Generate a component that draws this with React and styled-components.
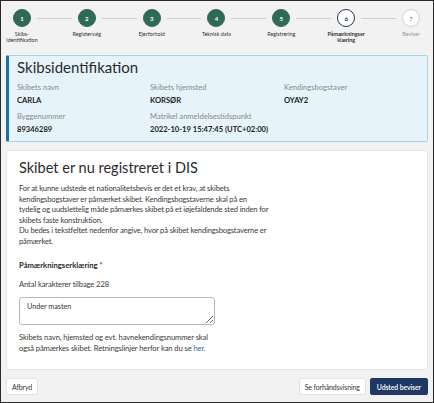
import React from "react";
import styled, { createGlobalStyle } from "styled-components";

const Global = createGlobalStyle`
  html, body { margin: 0; padding: 0; }
  body { font-family: "Lato", "Open Sans", sans-serif; color: #2b2b2b; background: #f2f2f2; }
  * { box-sizing: border-box; }
`;

const Frame = styled.div`
  width: 434px;
  height: 403px;
  border: 1px solid #2a2a2a;
  background: #f2f2f2;
  display: flex;
  flex-direction: column;
  overflow: hidden;
`;

const Stepper = styled.div`
  flex: none;
  display: flex;
  align-items: flex-start;
  padding: 8px 13px 0 12px;
  height: 54px;
`;

const Step = styled.div`
  position: relative;
  width: 18px;
  flex: none;
`;

const Circle = styled.div`
  width: 18px;
  height: 18px;
  border-radius: 50%;
  display: flex;
  align-items: center;
  justify-content: center;
  font-size: 6px;
  font-weight: 700;
  background: ${(p) => (p.$state === "done" ? "#2e6a55" : "#fff")};
  color: ${(p) => (p.$state === "done" ? "#fff" : p.$state === "active" ? "#1f2f55" : "#999")};
  border: ${(p) =>
    p.$state === "done" ? "1px solid #2e6a55" : p.$state === "active" ? "1.5px solid #27335e" : "1px solid #cfcfcf"};
`;

const StepLabel = styled.div`
  position: absolute;
  top: 22px;
  left: 50%;
  transform: translateX(-50%);
  width: 48px;
  text-align: center;
  font-size: 5.4px;
  line-height: 6.4px;
  font-weight: ${(p) => (p.$active ? 700 : 400)};
  color: ${(p) => (p.$muted ? "#999" : "#333")};
`;

const Line = styled.div`
  flex: 1;
  height: 1px;
  background: #cfcfcf;
  margin: 9px 6px 0;
`;

const InfoPanel = styled.section`
  flex: none;
  margin: 0 5px;
  height: 87px;
  background: #e6f3fb;
  border: 1px solid #a9d3e8;
  border-left: 3px solid #1b6ea6;
  border-radius: 2px;
  padding: 1px 10px 0 8px;
`;

const InfoTitle = styled.h2`
  margin: 0 0 5px;
  font-size: 15px;
  font-weight: 400;
  color: #2b2b2b;
  line-height: 20px;
`;

const InfoGrid = styled.div`
  display: grid;
  grid-template-columns: 133px 134px 1fr;
  row-gap: 6px;
`;

const Field = styled.div`
  display: flex;
  flex-direction: column;
  gap: 3px;
`;

const FieldLabel = styled.div`
  font-size: 7.6px;
  line-height: 10px;
  color: #8a8a8a;
`;

const FieldValue = styled.div`
  font-size: 7.6px;
  line-height: 10px;
  font-weight: 700;
  color: #222;
`;

const Card = styled.section`
  margin: 8px 5px 0;
  height: 220px;
  flex: none;
  background: #fff;
  border: 1px solid #e4e4e4;
  border-radius: 3px;
  padding: 7px 12px 0;
`;

const CardTitle = styled.h1`
  margin: 0 0 5px;
  font-size: 14.5px;
  font-weight: 400;
  line-height: 20px;
  color: #2b2b2b;
`;

const Paragraph = styled.p`
  margin: 0;
  white-space: nowrap;
  font-size: 7.6px;
  letter-spacing: -0.15px;
  line-height: 10.6px;
  color: #3a3a3a;
`;

const FieldHeading = styled.div`
  margin-top: 13.5px;
  font-size: 7.7px;
  font-weight: 700;
  color: #2b2b2b;
  line-height: 11px;
`;

const Required = styled.span`
  color: #c0243a;
`;

const Counter = styled.div`
  margin-top: 8px;
  font-size: 7.6px;
  letter-spacing: -0.1px;
  line-height: 11px;
  color: #3a3a3a;
`;

const TextArea = styled.textarea`
  display: block;
  margin-top: 7px;
  width: 196px;
  height: 28px;
  border: 1px solid #b8b8b8;
  border-radius: 3px;
  padding: 4px 7px;
  font-family: "Lato", "Open Sans", sans-serif;
  font-size: 7.2px;
  color: #333;
  resize: vertical;
  background: #fff;
`;

const Help = styled.p`
  margin: 7px 0 0;
  white-space: nowrap;
  font-size: 7.6px;
  letter-spacing: -0.1px;
  line-height: 11.4px;
  color: #3a3a3a;
`;

const Link = styled.a`
  color: #1b6ea6;
  text-decoration: none;
`;

const Footer = styled.div`
  flex: none;
  display: flex;
  align-items: center;
  padding: 8px 5px 0;
  gap: 4px;
`;

const Spacer = styled.div`
  flex: 1;
`;

const Button = styled.button`
  height: 17px;
  padding: 0 ${(p) => (p.$primary ? 6 : 5)}px;
  font-family: "Lato", "Open Sans", sans-serif;
  font-size: 6.9px;
  letter-spacing: -0.1px;
  border-radius: 2px;
  cursor: pointer;
  background: ${(p) => (p.$primary ? "#1e3a64" : "#fff")};
  color: ${(p) => (p.$primary ? "#fff" : "#333")};
  border: 1px solid ${(p) => (p.$primary ? "#1e3a64" : "#e2e2e2")};
  font-weight: ${(p) => (p.$primary ? 600 : 400)};
`;

const steps = [
  { n: 1, label: "Skibs-\nidentifikation", state: "done" },
  { n: 2, label: "Registervalg", state: "done" },
  { n: 3, label: "Ejerforhold", state: "done" },
  { n: 4, label: "Teknisk data", state: "done" },
  { n: 5, label: "Registrering", state: "done" },
  { n: 6, label: "Påmærkningser\nklæring", state: "active" },
  { n: 7, label: "Beviser", state: "todo" },
];

export default function App() {
  return (
    <>
      <Global />
      <Frame>
        <Stepper>
          {steps.map((s, i) => (
            <React.Fragment key={s.n}>
              {i > 0 && <Line />}
              <Step>
                <Circle $state={s.state}>{s.n}</Circle>
                <StepLabel $active={s.state === "active"} $muted={s.state === "todo"}>
                  {s.label.split("\n").map((l, j) => (
                    <div key={j}>{l}</div>
                  ))}
                </StepLabel>
              </Step>
            </React.Fragment>
          ))}
        </Stepper>

        <InfoPanel>
          <InfoTitle>Skibsidentifikation</InfoTitle>
          <InfoGrid>
            <Field>
              <FieldLabel>Skibets navn</FieldLabel>
              <FieldValue>CARLA</FieldValue>
            </Field>
            <Field>
              <FieldLabel>Skibets hjemsted</FieldLabel>
              <FieldValue>KORSØR</FieldValue>
            </Field>
            <Field>
              <FieldLabel>Kendingsbogstaver</FieldLabel>
              <FieldValue>OYAY2</FieldValue>
            </Field>
            <Field>
              <FieldLabel>Byggenummer</FieldLabel>
              <FieldValue>89346289</FieldValue>
            </Field>
            <Field>
              <FieldLabel>Matrikel anmeldelsestidspunkt</FieldLabel>
              <FieldValue>2022-10-19 15:47:45 (UTC+02:00)</FieldValue>
            </Field>
          </InfoGrid>
        </InfoPanel>

        <Card>
          <CardTitle>Skibet er nu registreret i DIS</CardTitle>
          <Paragraph>
            For at kunne udstede et nationalitetsbevis er det et krav, at skibets
            <br />
            kendingsbogstaver er påmærket skibet. Kendingsbogstaverne skal på en
            <br />
            tydelig og uudslettelig måde påmærkes skibet på et iøjefaldende sted inden for
            <br />
            skibets faste konstruktion.
            <br />
            Du bedes i tekstfeltet nedenfor angive, hvor på skibet kendingsbogstaverne er
            <br />
            påmærket.
          </Paragraph>
          <FieldHeading>
            Påmærkningserklæring <Required>*</Required>
          </FieldHeading>
          <Counter>Antal karakterer tilbage 228</Counter>
          <TextArea defaultValue="Under masten" />
          <Help>
            Skibets navn, hjemsted og evt. havnekendingsnummer skal
            <br />
            også påmærkes skibet. Retningslinjer herfor kan du se <Link href="#">her</Link>.
          </Help>
        </Card>

        <Footer>
          <Button>Afbryd</Button>
          <Spacer />
          <Button>Se forhåndsvisning</Button>
          <Button $primary>Udsted beviser</Button>
        </Footer>
      </Frame>
    </>
  );
}
